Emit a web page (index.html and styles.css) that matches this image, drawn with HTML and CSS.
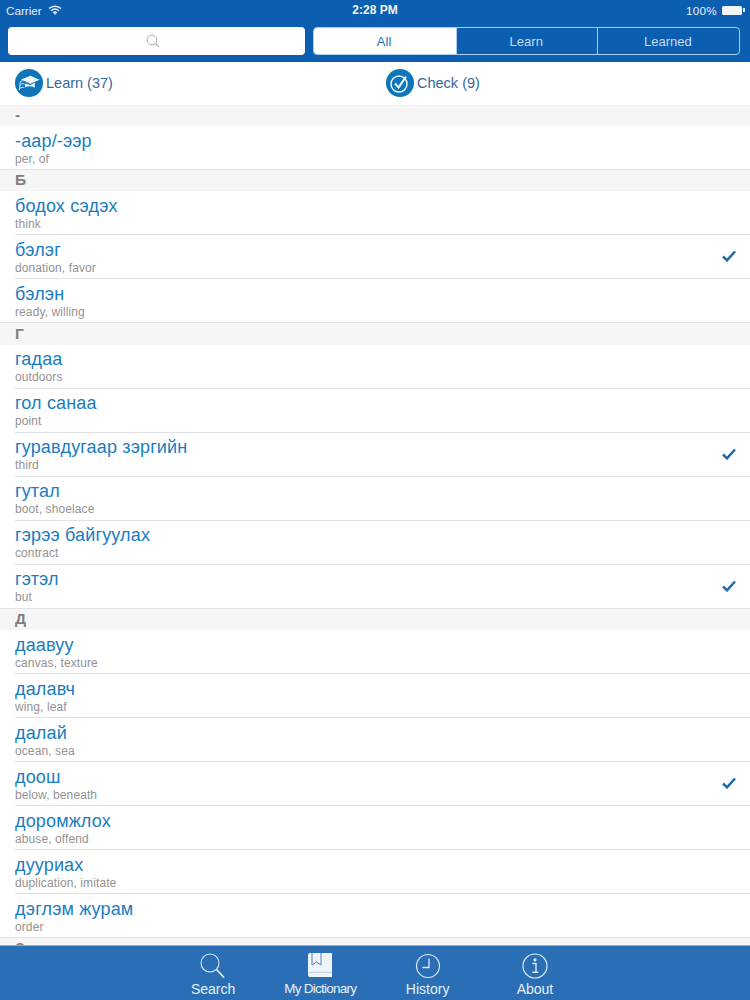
FILE: index.html
```html
<!DOCTYPE html>
<html lang="mn">
<head>
<meta charset="utf-8">
<title>My Dictionary</title>
<link rel="stylesheet" href="styles.css">
</head>
<body>
<div class="app">
  <header class="top">
    <div class="status">
      <div class="status-left"><span>Carrier</span>
        <svg class="wifi" width="14" height="10" viewBox="0 0 14 10"><path d="M1 3.600C4.500.4 9.500.4 13 3.600M3 5.700c2.400-2 5.600-2 8 0M5 7.700c1.200-.9 2.800-.9 4 0" fill="none" stroke="#e6eff8" stroke-width="1.400"/><path d="M7 10 5.700 8.500c.8-.5 1.800-.5 2.600 0z" fill="#e6eff8"/></svg>
      </div>
      <div class="status-time">2:28 PM</div>
      <div class="status-right"><span class="percent">100%</span><span class="battery"></span><span class="battery-tip"></span></div>
    </div>
    <div class="controls">
      <div class="search">
        <svg width="14" height="14" viewBox="0 0 16 16"><circle cx="6.800" cy="6.800" r="5.500" fill="none" stroke="#a8a8a8" stroke-width="1.100"/><path d="m10.800 10.800 4 4" stroke="#a8a8a8" stroke-width="1.300"/></svg>
      </div>
      <div class="segments">
        <div class="segment active">All</div>
        <div class="segment">Learn</div>
        <div class="segment">Learned</div>
      </div>
    </div>
  </header>

  <div class="actions">
    <div class="action">
      <svg class="badge" width="28" height="28" viewBox="0 0 28 28"><circle cx="14" cy="14" r="14" fill="#0e76b8"/><path d="M6 10.500 15.500 6.800 24.500 10.800 15.500 14.800z" fill="#eef5fa"/><path d="M10 14.500v4c3-1.700 6.300-1.700 9.800.2v-5.300L15.500 16z" fill="#eef5fa"/><path d="M7.800 11.800C5.800 11.500 5 12.500 5 15.500c0 2-.3 4-.6 5.500M5.500 15.500c1.500-1 2.800-1 4-.5M5.300 19c1.300-.7 2.700-.8 4-.4" fill="none" stroke="#eef5fa" stroke-width="1"/></svg>
      <span>Learn (37)</span>
    </div>
    <div class="action">
      <svg class="badge" width="28" height="28" viewBox="0 0 28 28"><circle cx="14" cy="14" r="14" fill="#0e76b8"/><circle cx="13" cy="15" r="8" fill="none" stroke="#eef5fa" stroke-width="1.500"/><path d="m9 14.500 3.600 4 7.400-11" fill="none" stroke="#eef5fa" stroke-width="2.200"/></svg>
      <span>Check (9)</span>
    </div>
  </div>

  <main class="list">
    <div class="section">-</div>
    <div class="row last"><div class="word">-аар/-ээр</div><div class="gloss">per, of</div></div>
    <div class="section">Б</div>
    <div class="row"><div class="word">бодох сэдэх</div><div class="gloss">think</div></div>
    <div class="row"><div class="word">бэлэг</div><div class="gloss">donation, favor</div><svg class="tick" width="14" height="12" viewBox="0 0 14 12"><path d="m1 6.500 4 3.800L13 1.500" fill="none" stroke="#1c69a8" stroke-width="2.500"/></svg></div>
    <div class="row last"><div class="word">бэлэн</div><div class="gloss">ready, willing</div></div>
    <div class="section">Г</div>
    <div class="row"><div class="word">гадаа</div><div class="gloss">outdoors</div></div>
    <div class="row"><div class="word">гол санаа</div><div class="gloss">point</div></div>
    <div class="row"><div class="word">гуравдугаар зэргийн</div><div class="gloss">third</div><svg class="tick" width="14" height="12" viewBox="0 0 14 12"><path d="m1 6.500 4 3.800L13 1.500" fill="none" stroke="#1c69a8" stroke-width="2.500"/></svg></div>
    <div class="row"><div class="word">гутал</div><div class="gloss">boot, shoelace</div></div>
    <div class="row"><div class="word">гэрээ байгуулах</div><div class="gloss">contract</div></div>
    <div class="row last"><div class="word">гэтэл</div><div class="gloss">but</div><svg class="tick" width="14" height="12" viewBox="0 0 14 12"><path d="m1 6.500 4 3.800L13 1.500" fill="none" stroke="#1c69a8" stroke-width="2.500"/></svg></div>
    <div class="section">Д</div>
    <div class="row"><div class="word">даавуу</div><div class="gloss">canvas, texture</div></div>
    <div class="row"><div class="word">далавч</div><div class="gloss">wing, leaf</div></div>
    <div class="row"><div class="word">далай</div><div class="gloss">ocean, sea</div></div>
    <div class="row"><div class="word">доош</div><div class="gloss">below, beneath</div><svg class="tick" width="14" height="12" viewBox="0 0 14 12"><path d="m1 6.500 4 3.800L13 1.500" fill="none" stroke="#1c69a8" stroke-width="2.500"/></svg></div>
    <div class="row"><div class="word">доромжлох</div><div class="gloss">abuse, offend</div></div>
    <div class="row"><div class="word">дууриах</div><div class="gloss">duplication, imitate</div></div>
    <div class="row last"><div class="word">дэглэм журам</div><div class="gloss">order</div></div>
    <div class="section">З</div>
  </main>

  <nav class="tabs">
    <div class="tab">
      <svg width="28" height="28" viewBox="0 0 28 28"><circle cx="11" cy="11" r="9" fill="none" stroke="#dce9f5" stroke-width="1.100"/><path d="m17.500 17.500 7.500 8" stroke="#dce9f5" stroke-width="1.800"/></svg>
      <span>Search</span>
    </div>
    <div class="tab">
      <svg width="28" height="28" viewBox="0 0 28 28"><path d="M4 1h22v24H4a2 2 0 0 1-2-2V3a2 2 0 0 1 2-2z" fill="#eef4fa"/><path d="M2.500 20.300H26" stroke="#a9c6e2" stroke-width=".8"/><path d="M6 1v12l4.500-3 4.500 3V1" fill="none" stroke="#4f86bd" stroke-width="1"/></svg>
      <span class="tight">My Dictionary</span>
    </div>
    <div class="tab">
      <svg width="28" height="28" viewBox="0 0 28 28"><circle cx="14" cy="14" r="11.500" fill="none" stroke="#dce9f5" stroke-width="1.200"/><path d="M15 6.500V15.500H8.500" fill="none" stroke="#dce9f5" stroke-width="1.300"/></svg>
      <span>History</span>
    </div>
    <div class="tab">
      <svg width="28" height="28" viewBox="0 0 28 28"><circle cx="14" cy="14" r="12" fill="none" stroke="#dce9f5" stroke-width="1.200"/><circle cx="14" cy="7.800" r="1.600" fill="#dce9f5"/><path d="M11.500 11.500H15v8.500M11.300 20.300h6" fill="none" stroke="#dce9f5" stroke-width="1.400"/></svg>
      <span>About</span>
    </div>
  </nav>
</div>
</body>
</html>
```

FILE: styles.css
```css
* { box-sizing: border-box; }
html, body { margin: 0; padding: 0; }
body { font-family: "Liberation Sans", Arial, sans-serif; background: #fff; }
.app { width: 750px; height: 1000px; display: flex; flex-direction: column; overflow: hidden; }

.top { height: 62px; flex: none; background: #0c5fb0; color: #e3edf7; padding: 0 8px; }
.status { height: 20px; display: grid; grid-template-columns: 1fr auto 1fr; align-items: center; font-size: 11.700px; }
.status-left { display: flex; align-items: center; gap: 6px; margin-left: -2px; }
.status-time { font-weight: 700; color: #eef4fa; font-size: 12px; }
.status-right { display: flex; justify-content: flex-end; align-items: center; gap: 5px; margin-right: -3px; }
.percent { letter-spacing: .3px; }
.battery { width: 20px; height: 9px; background: #f2f6fb; border-radius: 1.500px; }
.battery-tip { width: 2px; height: 4px; background: #dfe9f4; margin-left: -4px; }
.controls { display: flex; gap: 8px; height: 28px; margin-top: 7px; }
.search { width: 297px; height: 28px; background: #fff; border-radius: 4px; display: flex; align-items: center; justify-content: center; padding-right: 8px; }
.segments { flex: 1; margin-right: 2px; display: grid; grid-template-columns: repeat(3, 1fr); border: 1px solid #a9cdea; border-radius: 4px; overflow: hidden; }
.segment { display: flex; align-items: center; justify-content: center; padding-right: 1.500px; font-size: 13px; color: #c8dcef; border-left: 1px solid #a9cdea; }
.segment:first-child { border-left: 0; }
.segment.active { background: #fff; color: #2a6fae; }

.actions { height: 42.600px; flex: none; display: grid; grid-template-columns: 371px 1fr; align-items: center; padding-left: 15px; color: #33689a; font-size: 14.500px; }
.action { display: flex; align-items: center; gap: 3px; }
.badge { flex: none; }

.list { flex: 1; min-height: 0; overflow: hidden; }
.section { height: 21.330px; background: #f6f6f7; padding: 2.500px 0 0 15px; font-size: 15.500px; line-height: 16px; font-weight: 700; color: #808080; }
.row { height: 44px; position: relative; padding: 4.700px 0 0 15px; }
.row::after { content: ""; position: absolute; left: 15px; right: 0; bottom: 0; height: 1px; background: #e3e3e5; }
.row.last::after { left: 0; }
.word { font-size: 18px; line-height: 21px; color: #1a7dbf; letter-spacing: .15px; }
.gloss { font-size: 12px; line-height: 13px; color: #929292; margin-top: 1px; letter-spacing: .1px; }
.tick { position: absolute; right: 14px; top: 15px; }

.tabs { height: 55px; flex: none; background: #2a6fb5; border-top: 1px solid #8fb0d0; display: flex; justify-content: center; padding-right: 2px; }
.tab { width: 107.300px; display: flex; flex-direction: column; align-items: center; padding-top: 6px; color: #e6eff8; font-size: 14px; line-height: 16px; }
.tab svg { margin-bottom: 1px; }
.tab .tight { letter-spacing: -.75px; font-size: 13.500px; }
```
